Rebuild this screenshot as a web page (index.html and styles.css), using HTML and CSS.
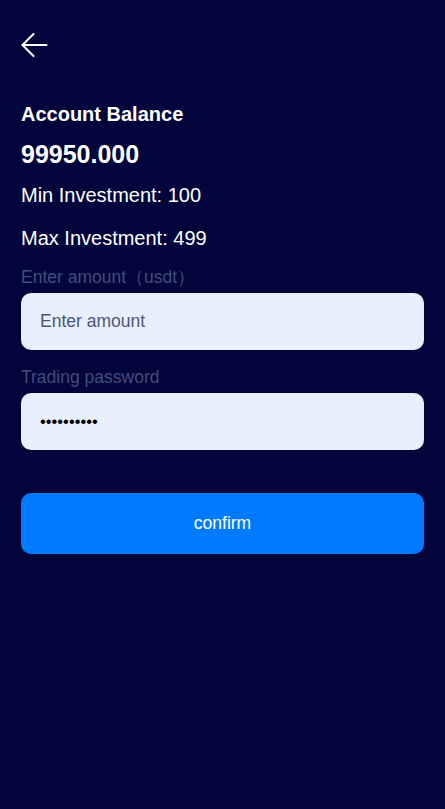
FILE: index.html
```html
<!DOCTYPE html>
<html lang="en">
	<head>
		<meta charset="UTF-8" />
		<meta name="viewport" content="width=device-width, initial-scale=1.0" />
		<title>Invest</title>
		<link rel="stylesheet" href="styles.css">
	</head>

	<body>
		<div class="page">
			<div class="top-bar">
				<button class="back-btn" aria-label="back">
					<svg width="27" height="24" viewBox="0 0 27 24" fill="none" stroke="#ffffff" stroke-width="2" stroke-linecap="round" stroke-linejoin="round">
						<path d="M25.5 12H1.5" />
						<path d="M12.5 1L1.5 12L12.5 23" />
					</svg>
				</button>
			</div>

			<div class="balance-title">Account Balance</div>
			<div class="balance-value">99950.000</div>
			<div class="limit">Min Investment: 100</div>
			<div class="limit max">Max Investment: 499</div>

			<div class="field">
				<label class="field-label">Enter amount（usdt）</label>
				<input class="field-input" type="text" placeholder="Enter amount" />
			</div>
			<div class="field">
				<label class="field-label">Trading password</label>
				<input class="field-input pwd" type="password" value="1234567890" />
			</div>

			<button class="confirm-btn">confirm</button>
		</div>
	</body>
</html>
```

FILE: styles.css
```css
* {
	padding: 0;
	margin: 0;
	box-sizing: border-box;
}
html, body {
	background-color: #02053c;
	height: 100%;
}
body {
	font-family: "Liberation Sans", Arial, sans-serif;
	color: #ffffff;
}
.page {
	padding: 0 21px;
}
.top-bar {
	height: 90px;
	padding-top: 33px;
}
.back-btn {
	border: none;
	background: none;
	display: block;
	cursor: pointer;
}
.back-btn svg {
	display: block;
}
.balance-title {
	font-size: 20px;
	font-weight: bold;
	line-height: 24px;
	margin-top: 12px;
}
.balance-value {
	font-size: 25px;
	font-weight: bold;
	line-height: 30px;
	margin-top: 13px;
}
.limit {
	font-size: 20px;
	line-height: 24px;
	margin-top: 14px;
}
.limit.max {
	margin-top: 19px;
}
.field {
	display: flex;
	flex-direction: column;
}
.field-label {
	font-size: 17.5px;
	line-height: 21px;
	color: #424c7c;
	margin-top: 17px;
	margin-bottom: 5px;
}
.field-input {
	height: 57px;
	border: none;
	outline: none;
	border-radius: 10px;
	background-color: #e8f0fe;
	padding: 0 19px;
	font-family: "Liberation Sans", Arial, sans-serif;
	font-size: 17.5px;
	color: #000000;
}
.field-input::placeholder {
	color: #4c5676;
}
.pwd {
	font-size: 16.5px;
}
.confirm-btn {
	display: block;
	width: 100%;
	height: 61px;
	margin-top: 43px;
	border: none;
	border-radius: 10px;
	background-color: #007bff;
	color: #ffffff;
	font-family: "Liberation Sans", Arial, sans-serif;
	font-size: 17.5px;
	cursor: pointer;
}
```
